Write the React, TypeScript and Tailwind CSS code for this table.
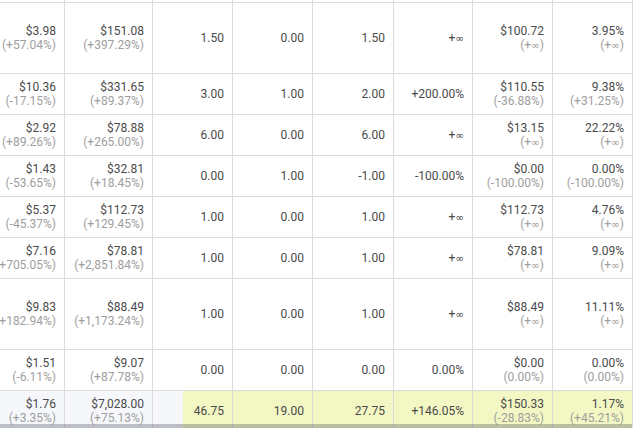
import React from "react";

type Cell = string | [string, string];
type Row = { h: number; cells: Cell[] };

const widths = [65, 88, 80, 80, 81, 79, 80, 80];

const rows: Row[] = [
  { h: 71, cells: [["$3.98", "(+57.04%)"], ["$151.08", "(+397.29%)"], "1.50", "0.00", "1.50", "+∞", ["$100.72", "(+∞)"], ["3.95%", "(+∞)"]] },
  { h: 41, cells: [["$10.36", "(-17.15%)"], ["$331.65", "(+89.37%)"], "3.00", "1.00", "2.00", "+200.00%", ["$110.55", "(-36.88%)"], ["9.38%", "(+31.25%)"]] },
  { h: 41, cells: [["$2.92", "(+89.26%)"], ["$78.88", "(+265.00%)"], "6.00", "0.00", "6.00", "+∞", ["$13.15", "(+∞)"], ["22.22%", "(+∞)"]] },
  { h: 41, cells: [["$1.43", "(-53.65%)"], ["$32.81", "(+18.45%)"], "0.00", "1.00", "-1.00", "-100.00%", ["$0.00", "(-100.00%)"], ["0.00%", "(-100.00%)"]] },
  { h: 41, cells: [["$5.37", "(-45.37%)"], ["$112.73", "(+129.45%)"], "1.00", "0.00", "1.00", "+∞", ["$112.73", "(+∞)"], ["4.76%", "(+∞)"]] },
  { h: 41, cells: [["$7.16", "(+705.05%)"], ["$78.81", "(+2,851.84%)"], "1.00", "0.00", "1.00", "+∞", ["$78.81", "(+∞)"], ["9.09%", "(+∞)"]] },
  { h: 71, cells: [["$9.83", "(+182.94%)"], ["$88.49", "(+1,173.24%)"], "1.00", "0.00", "1.00", "+∞", ["$88.49", "(+∞)"], ["11.11%", "(+∞)"]] },
  { h: 41, cells: [["$1.51", "(-6.11%)"], ["$9.07", "(+87.78%)"], "0.00", "0.00", "0.00", "0.00%", ["$0.00", "(0.00%)"], ["0.00%", "(0.00%)"]] },
];

const total: Cell[] = [["$1.76", "(+3.35%)"], ["$7,028.00", "(+75.13%)"], "46.75", "19.00", "27.75", "+146.05%", ["$150.33", "(-28.83%)"], ["1.17%", "(+45.21%)"]];

function Txt({ s }: { s: string }) {
  if (!s.includes("∞")) return <>{s}</>;
  const parts = s.split("∞");
  return (
    <>
      {parts[0]}
      <span className="text-[10.5px] relative -top-[0.5px]" style={{ fontFamily: "'DejaVu Sans', sans-serif" }}>∞</span>
      {parts[1]}
    </>
  );
}

function Content({ c }: { c: Cell }) {
  if (typeof c === "string") {
    return (
      <span className="whitespace-nowrap shrink-0 text-[#4a4a4a]">
        <Txt s={c} />
      </span>
    );
  }
  return (
    <div className="flex flex-col items-end shrink-0 whitespace-nowrap">
      <span className="text-[#4a4a4a]">
        <Txt s={c[0]} />
      </span>
      <span className="text-[#9e9e9e]">
        <Txt s={c[1]} />
      </span>
    </div>
  );
}

function CellBox({ c, w, h, extra = "" }: { c: Cell; w: number; h: number; extra?: string }) {
  return (
    <div
      className={`flex items-center justify-end pr-[8px] border-r border-b border-[#dcdcdc] box-border shrink-0 ${extra}`}
      style={{ width: w, height: h }}
    >
      <Content c={c} />
    </div>
  );
}

export default function App() {
  return (
    <div
      className="relative w-[634px] h-[428px] overflow-hidden bg-white text-[12px] leading-[14px]"
      style={{ fontFamily: "Roboto, 'Liberation Sans', sans-serif" }}
    >
      <div className="flex flex-col">
        <div className="flex h-[3px]">
          {widths.map((w, i) => (
            <div key={i} className="h-[3px] border-r border-b border-[#dcdcdc] box-border shrink-0" style={{ width: w }} />
          ))}
        </div>
        {rows.map((r, ri) => (
          <div key={ri} className="flex">
            {r.cells.map((c, ci) => (
              <CellBox key={ci} c={c} w={widths[ci]} h={r.h} />
            ))}
          </div>
        ))}
        <div className="flex">
          {total.map((c, ci) => (
            <CellBox
              key={ci}
              c={c}
              w={widths[ci]}
              h={41}
              extra={
                ci < 2
                  ? "bg-[#f5f7fa]"
                  : ci === 2
                  ? "bg-[linear-gradient(to_right,#f5f7fa_30px,#f3f7c3_30px)]"
                  : "bg-[#f3f7c3]"
              }
            />
          ))}
        </div>
      </div>
      <div className="absolute left-0 top-[424px] w-[632px] h-[4px] bg-[rgba(60,64,80,0.3)]" />
    </div>
  );
}
